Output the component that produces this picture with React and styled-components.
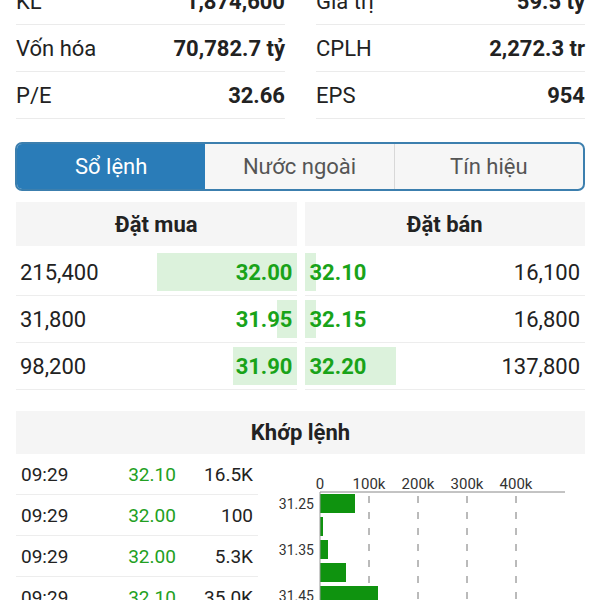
import React from "react";
import styled, { createGlobalStyle } from "styled-components";

const GlobalStyle = createGlobalStyle`
  body {
    margin: 0;
    background: #ffffff;
    font-family: Roboto, "Noto Sans", sans-serif;
    color: #222;
    overflow: hidden;
  }
`;

const Page = styled.div`
  width: 600px;
  height: 600px;
  overflow: hidden;
`;

const Stats = styled.div`
  display: grid;
  grid-template-columns: 1fr 1fr;
  column-gap: 31px;
  padding: 0 15px 0 16px;
  margin-top: -22px;
`;

const StatRow = styled.div`
  display: flex;
  align-items: center;
  justify-content: space-between;
  height: 46px;
  border-bottom: 1px solid #ebebeb;
  font-size: 22px;
`;

const StatLabel = styled.span`
  color: #222;
`;

const StatValue = styled.span`
  font-weight: 700;
  color: #222;
`;

const Tabs = styled.div`
  display: flex;
  margin: 23px 15px 0 15px;
  height: 45px;
  border: 2px solid #3c7fae;
  border-radius: 7px;
  overflow: hidden;
  background: #f6f6f6;
`;

const Tab = styled.div`
  flex: 1;
  display: flex;
  align-items: center;
  justify-content: center;
  font-size: 22px;
  color: ${(p) => (p.$active ? "#ffffff" : "#555")};
  background: ${(p) => (p.$active ? "#2a7cb8" : "transparent")};
  border-left: ${(p) => (p.$divider ? "1px solid #d8d8d8" : "none")};
`;

const Book = styled.div`
  display: grid;
  grid-template-columns: 1fr 1fr;
  column-gap: 8px;
  margin: 11px 15px 0 16px;
`;

const SideHeader = styled.div`
  height: 44px;
  display: flex;
  align-items: center;
  justify-content: center;
  background: #f5f5f5;
  font-size: 22px;
  font-weight: 700;
  margin-bottom: 3px;
`;

const BookRow = styled.div`
  position: relative;
  height: 46px;
  border-bottom: 1px solid #ededed;
  display: flex;
  align-items: center;
  justify-content: space-between;
  padding: ${(p) => (p.$sell ? "0 5px 0 5px" : "0 4px 0 4px")};
  font-size: 22px;
`;

const DepthBar = styled.div`
  position: absolute;
  top: 4px;
  bottom: 4px;
  ${(p) => (p.$sell ? "left: 0;" : "right: 0;")}
  background: #dcf2dc;
`;

const Volume = styled.span`
  position: relative;
  color: #222;
`;

const Price = styled.span`
  position: relative;
  color: #19a319;
  font-weight: 700;
`;

const Matched = styled.div`
  margin: 21px 15px 0 16px;
`;

const MatchedHeader = styled.div`
  height: 43px;
  display: flex;
  align-items: center;
  justify-content: center;
  background: #f5f5f5;
  font-size: 22px;
  font-weight: 700;
`;

const MatchedBody = styled.div`
  display: flex;
`;

const TradeList = styled.div`
  width: 242px;
`;

const TradeRow = styled.div`
  display: grid;
  grid-template-columns: 90px 82px 1fr;
  align-items: center;
  height: 40px;
  border-bottom: 1px solid #ededed;
  padding: 0 5px 0 5px;
  font-size: 19px;
`;

const Time = styled.span`
  color: #222;
`;

const TradePrice = styled.span`
  color: #22a022;
  text-align: center;
`;

const TradeVol = styled.span`
  color: #222;
  text-align: right;
`;

const Chart = styled.svg`
  display: block;
  flex: 1;
  height: 160px;
  font-family: Roboto, "Noto Sans", sans-serif;
`;

const stats = [
  ["KL", "1,874,600", "Giá trị", "59.5 tỷ"],
  ["Vốn hóa", "70,782.7 tỷ", "CPLH", "2,272.3 tr"],
  ["P/E", "32.66", "EPS", "954"],
];

const buys = [
  { vol: "215,400", price: "32.00", bar: 140 },
  { vol: "31,800", price: "31.95", bar: 20 },
  { vol: "98,200", price: "31.90", bar: 64 },
];

const sells = [
  { vol: "16,100", price: "32.10", bar: 11 },
  { vol: "16,800", price: "32.15", bar: 11 },
  { vol: "137,800", price: "32.20", bar: 91 },
];

const trades = [
  ["09:29", "32.10", "16.5K"],
  ["09:29", "32.00", "100"],
  ["09:29", "32.00", "5.3K"],
  ["09:29", "32.10", "35.0K"],
];

const volumeBars = [
  { label: "31.25", w: 35 },
  { label: "", w: 3 },
  { label: "31.35", w: 8 },
  { label: "", w: 26 },
  { label: "31.45", w: 58 },
  { label: "", w: 12 },
];

const X0 = 62;
const STEP = 49;

const VolumeChart = () => (
  <Chart viewBox="0 0 327 160" width="327" height="160">
    {["0", "100k", "200k", "300k", "400k"].map((t, i) => (
      <text
        key={t}
        x={X0 + i * STEP}
        y={35}
        fontSize="15"
        fill="#333"
        textAnchor="middle"
      >
        {t}
      </text>
    ))}
    <line x1={X0} y1={38} x2={307} y2={38} stroke="#888" strokeWidth="1" />
    {[1, 2, 3, 4].map((i) => (
      <line
        key={i}
        x1={X0 + i * STEP}
        y1={42}
        x2={X0 + i * STEP}
        y2={160}
        stroke="#777"
        strokeWidth="1"
        strokeDasharray="7 9"
      />
    ))}
    {volumeBars.map((b, i) => (
      <g key={i}>
        <rect x={X0} y={40 + i * 23} width={b.w} height={19} fill="#0f930f" />
        {b.label && (
          <text
            x={56}
            y={55 + i * 23}
            fontSize="14"
            fill="#333"
            textAnchor="end"
          >
            {b.label}
          </text>
        )}
      </g>
    ))}
    <line x1={X0} y1={38} x2={X0} y2={160} stroke="#999" strokeWidth="1" />
  </Chart>
);

const App = () => {
  return (
    <Page>
      <GlobalStyle />
      <Stats>
        {stats.map((s) => (
          <React.Fragment key={s[0]}>
            <StatRow>
              <StatLabel>{s[0]}</StatLabel>
              <StatValue>{s[1]}</StatValue>
            </StatRow>
            <StatRow>
              <StatLabel>{s[2]}</StatLabel>
              <StatValue>{s[3]}</StatValue>
            </StatRow>
          </React.Fragment>
        ))}
      </Stats>

      <Tabs>
        <Tab $active>Sổ lệnh</Tab>
        <Tab>Nước ngoài</Tab>
        <Tab $divider>Tín hiệu</Tab>
      </Tabs>

      <Book>
        <div>
          <SideHeader>Đặt mua</SideHeader>
          {buys.map((r) => (
            <BookRow key={r.price}>
              <DepthBar style={{ width: r.bar }} />
              <Volume>{r.vol}</Volume>
              <Price>{r.price}</Price>
            </BookRow>
          ))}
        </div>
        <div>
          <SideHeader>Đặt bán</SideHeader>
          {sells.map((r) => (
            <BookRow key={r.price} $sell>
              <DepthBar $sell style={{ width: r.bar }} />
              <Price>{r.price}</Price>
              <Volume>{r.vol}</Volume>
            </BookRow>
          ))}
        </div>
      </Book>

      <Matched>
        <MatchedHeader>Khớp lệnh</MatchedHeader>
        <MatchedBody>
          <TradeList>
            {trades.map((t, i) => (
              <TradeRow key={i}>
                <Time>{t[0]}</Time>
                <TradePrice>{t[1]}</TradePrice>
                <TradeVol>{t[2]}</TradeVol>
              </TradeRow>
            ))}
          </TradeList>
          <VolumeChart />
        </MatchedBody>
      </Matched>
    </Page>
  );
};

export default App;
